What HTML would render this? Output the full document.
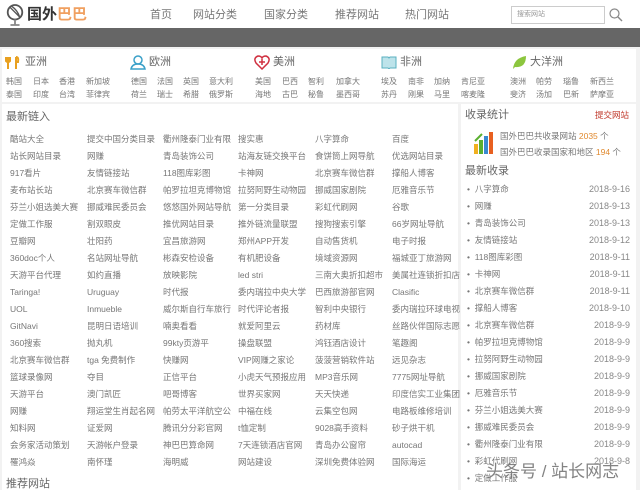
<!DOCTYPE html>
<html><head><meta charset="utf-8"><style>
*{margin:0;padding:0;box-sizing:border-box}
body{width:640px;height:490px;overflow:hidden;background:#f2f2f2;font-family:"Liberation Sans","Noto Sans CJK SC",sans-serif;color:#555;position:relative}
.a{position:absolute;white-space:nowrap;line-height:12px}
.hdr{position:absolute;left:0;top:0;width:640px;height:28px;background:#fff}
.band{position:absolute;left:0;top:28px;width:640px;height:19px;background:#666}
.cont{position:absolute;left:2px;top:49px;width:634px;height:53px;background:#fff}
.main{position:absolute;left:2px;top:104px;width:456px;height:386px;background:#fff}
.side{position:absolute;left:461px;top:104px;width:175px;height:386px;background:#fff}
.nav{font-size:11px;color:#777;top:9px}
.ch{font-size:11px;color:#666;top:56px}
.cc{font-size:8px;color:#777}
.l{font-size:8.5px;color:#777}
.h{font-size:11px;color:#666}
.d{font-size:9px;color:#888}
</style></head><body>
<div class="hdr"></div><div class="band"></div><div class="cont"></div><div class="main"></div><div class="side"></div>

<svg class="a" style="left:5px;top:3px" width="20" height="24" viewBox="0 0 22 26"><circle cx="11" cy="10" r="8" fill="none" stroke="#555" stroke-width="2"/><path d="M5 4 L17 16 M7 3 Q14 8 16 15" stroke="#555" stroke-width="1.5" fill="none"/><path d="M11 18 V23 M6 24 H16" stroke="#888" stroke-width="2"/></svg>
<div class="a" style="left:27px;top:7px;font-size:15px;line-height:16px;color:#333;font-weight:bold">国外<span style="color:#f0a060">巴巴</span></div>
<div class="a nav" style="left:150px">首页</div>
<div class="a nav" style="left:193px">网站分类</div>
<div class="a nav" style="left:264px">国家分类</div>
<div class="a nav" style="left:335px">推荐网站</div>
<div class="a nav" style="left:405px">热门网站</div>
<div class="a" style="left:511px;top:6px;width:94px;height:18px;border:1px solid #ccc;background:#fff;font-size:7px;color:#999;padding:2px 0 0 5px">搜索网站</div>
<svg class="a" style="left:608px;top:7px" width="16" height="16"><circle cx="6.5" cy="6.5" r="4.5" fill="none" stroke="#888" stroke-width="1.2"/><path d="M10 10 L14 14" stroke="#888" stroke-width="1.4"/></svg>

<svg class="a" style="left:5px;top:56px" width="16" height="14"><path d="M3 1 V13 M1 1 V5 Q3 7 5 5 V1 M11 1 V13 M11 1 Q14 1 13 6 L11 6" stroke="#e8a020" stroke-width="2" fill="none"/></svg>
<div class="a ch" style="left:25px">亚洲</div>
<svg class="a" style="left:130px;top:55px" width="16" height="15"><circle cx="8" cy="5" r="4" fill="none" stroke="#3aa0c8" stroke-width="1.5"/><path d="M1 14 Q2 9 8 9 Q14 9 15 14 Z" fill="none" stroke="#3aa0c8" stroke-width="1.5"/></svg>
<div class="a ch" style="left:149px">欧洲</div>
<svg class="a" style="left:254px;top:55px" width="16" height="15"><path d="M8 14 L2 8 Q-1 3 4 1 Q7 1 8 3 Q9 1 12 1 Q17 3 14 8 Z" fill="none" stroke="#d03040" stroke-width="1.5"/><path d="M8 4 V10 M5 7 H11" stroke="#d03040" stroke-width="1.5"/></svg>
<div class="a ch" style="left:273px">美洲</div>
<svg class="a" style="left:381px;top:56px" width="16" height="13"><path d="M1 1 H7 L8 2 L9 1 H15 V12 H9 L8 13 L7 12 H1 Z" fill="#bde3ea" stroke="#5ab0c0"/></svg>
<div class="a ch" style="left:400px">非洲</div>
<svg class="a" style="left:511px;top:55px" width="16" height="15"><path d="M2 14 Q3 3 15 1 Q15 13 4 12 Z" fill="#8cc63e"/></svg>
<div class="a ch" style="left:530px">大洋洲</div>

<div class="a cc" style="left:6px;top:76px">韩国</div><div class="a cc" style="left:33px;top:76px">日本</div><div class="a cc" style="left:59px;top:76px">香港</div><div class="a cc" style="left:86px;top:76px">新加坡</div>
<div class="a cc" style="left:6px;top:89px">泰国</div><div class="a cc" style="left:33px;top:89px">印度</div><div class="a cc" style="left:59px;top:89px">台湾</div><div class="a cc" style="left:86px;top:89px">菲律宾</div>
<div class="a cc" style="left:131px;top:76px">德国</div><div class="a cc" style="left:157px;top:76px">法国</div><div class="a cc" style="left:183px;top:76px">英国</div><div class="a cc" style="left:209px;top:76px">意大利</div>
<div class="a cc" style="left:131px;top:89px">荷兰</div><div class="a cc" style="left:157px;top:89px">瑞士</div><div class="a cc" style="left:183px;top:89px">希腊</div><div class="a cc" style="left:209px;top:89px">俄罗斯</div>
<div class="a cc" style="left:255px;top:76px">美国</div><div class="a cc" style="left:282px;top:76px">巴西</div><div class="a cc" style="left:308px;top:76px">智利</div><div class="a cc" style="left:336px;top:76px">加拿大</div>
<div class="a cc" style="left:255px;top:89px">海地</div><div class="a cc" style="left:282px;top:89px">古巴</div><div class="a cc" style="left:308px;top:89px">秘鲁</div><div class="a cc" style="left:336px;top:89px">墨西哥</div>
<div class="a cc" style="left:381px;top:76px">埃及</div><div class="a cc" style="left:408px;top:76px">南非</div><div class="a cc" style="left:434px;top:76px">加纳</div><div class="a cc" style="left:461px;top:76px">肯尼亚</div>
<div class="a cc" style="left:381px;top:89px">苏丹</div><div class="a cc" style="left:408px;top:89px">刚果</div><div class="a cc" style="left:434px;top:89px">马里</div><div class="a cc" style="left:461px;top:89px">喀麦隆</div>
<div class="a cc" style="left:510px;top:76px">澳洲</div><div class="a cc" style="left:536px;top:76px">帕劳</div><div class="a cc" style="left:563px;top:76px">瑙鲁</div><div class="a cc" style="left:590px;top:76px">新西兰</div>
<div class="a cc" style="left:510px;top:89px">斐济</div><div class="a cc" style="left:536px;top:89px">汤加</div><div class="a cc" style="left:563px;top:89px">巴新</div><div class="a cc" style="left:590px;top:89px">萨摩亚</div>

<div class="a h" style="left:6px;top:111px">最新链入</div>
<div class="a l" style="left:10px;top:133px">酷站大全</div><div class="a l" style="left:87px;top:133px">提交中国分类目录</div><div class="a l" style="left:163px;top:133px">衢州隆泰门业有限</div><div class="a l" style="left:238px;top:133px">搜实惠</div><div class="a l" style="left:315px;top:133px">八字算命</div><div class="a l" style="left:392px;top:133px">百度</div>
<div class="a l" style="left:10px;top:150px">站长网站目录</div><div class="a l" style="left:87px;top:150px">网赚</div><div class="a l" style="left:163px;top:150px">青岛装饰公司</div><div class="a l" style="left:238px;top:150px">站海友链交换平台</div><div class="a l" style="left:315px;top:150px">食饼筒上网导航</div><div class="a l" style="left:392px;top:150px">优选网站目录</div>
<div class="a l" style="left:10px;top:167px">917看片</div><div class="a l" style="left:87px;top:167px">友情链接站</div><div class="a l" style="left:163px;top:167px">118图库彩图</div><div class="a l" style="left:238px;top:167px">卡神网</div><div class="a l" style="left:315px;top:167px">北京赛车微信群</div><div class="a l" style="left:392px;top:167px">撑船人博客</div>
<div class="a l" style="left:10px;top:184px">麦布站长站</div><div class="a l" style="left:87px;top:184px">北京赛车微信群</div><div class="a l" style="left:163px;top:184px">帕罗拉坦克博物馆</div><div class="a l" style="left:238px;top:184px">拉努阿野生动物园</div><div class="a l" style="left:315px;top:184px">挪威国家剧院</div><div class="a l" style="left:392px;top:184px">厄雅音乐节</div>
<div class="a l" style="left:10px;top:201px">芬兰小姐选美大赛</div><div class="a l" style="left:87px;top:201px">挪威难民委员会</div><div class="a l" style="left:163px;top:201px">悠悠国外网站导航</div><div class="a l" style="left:238px;top:201px">第一分类目录</div><div class="a l" style="left:315px;top:201px">彩虹代刷网</div><div class="a l" style="left:392px;top:201px">谷歌</div>
<div class="a l" style="left:10px;top:218px">定做工作服</div><div class="a l" style="left:87px;top:218px">割双眼皮</div><div class="a l" style="left:163px;top:218px">推优网站目录</div><div class="a l" style="left:238px;top:218px">推外链流量联盟</div><div class="a l" style="left:315px;top:218px">搜狗搜索引擎</div><div class="a l" style="left:392px;top:218px">66岁网址导航</div>
<div class="a l" style="left:10px;top:235px">豆瓣网</div><div class="a l" style="left:87px;top:235px">壮阳药</div><div class="a l" style="left:163px;top:235px">宜昌旅游网</div><div class="a l" style="left:238px;top:235px">郑州APP开发</div><div class="a l" style="left:315px;top:235px">自动售货机</div><div class="a l" style="left:392px;top:235px">电子时报</div>
<div class="a l" style="left:10px;top:252px">360doc个人</div><div class="a l" style="left:87px;top:252px">名站网址导航</div><div class="a l" style="left:163px;top:252px">彬森安检设备</div><div class="a l" style="left:238px;top:252px">有机肥设备</div><div class="a l" style="left:315px;top:252px">境域资源网</div><div class="a l" style="left:392px;top:252px">福城亚丁旅游网</div>
<div class="a l" style="left:10px;top:269px">天游平台代理</div><div class="a l" style="left:87px;top:269px">如约直播</div><div class="a l" style="left:163px;top:269px">放映影院</div><div class="a l" style="left:238px;top:269px">led stri</div><div class="a l" style="left:315px;top:269px">三南大奥折扣超市</div><div class="a l" style="left:392px;top:269px">美属社连锁折扣店</div>
<div class="a l" style="left:10px;top:286px">Taringa!</div><div class="a l" style="left:87px;top:286px">Uruguay</div><div class="a l" style="left:163px;top:286px">时代报</div><div class="a l" style="left:238px;top:286px">委内瑞拉中央大学</div><div class="a l" style="left:315px;top:286px">巴西旅游部官网</div><div class="a l" style="left:392px;top:286px">Clasific</div>
<div class="a l" style="left:10px;top:303px">UOL</div><div class="a l" style="left:87px;top:303px">Inmueble</div><div class="a l" style="left:163px;top:303px">威尔斯自行车旅行</div><div class="a l" style="left:238px;top:303px">时代评论者报</div><div class="a l" style="left:315px;top:303px">智利中央银行</div><div class="a l" style="left:392px;top:303px">委内瑞拉环球电视</div>
<div class="a l" style="left:10px;top:320px">GitNavi</div><div class="a l" style="left:87px;top:320px">昆明日语培训</div><div class="a l" style="left:163px;top:320px">喃奥看看</div><div class="a l" style="left:238px;top:320px">就爱阿里云</div><div class="a l" style="left:315px;top:320px">药材库</div><div class="a l" style="left:392px;top:320px">丝路伙伴国际志愿</div>
<div class="a l" style="left:10px;top:337px">360搜索</div><div class="a l" style="left:87px;top:337px">抛丸机</div><div class="a l" style="left:163px;top:337px">99kty页游平</div><div class="a l" style="left:238px;top:337px">操盘联盟</div><div class="a l" style="left:315px;top:337px">鸿钰酒店设计</div><div class="a l" style="left:392px;top:337px">笔趣阁</div>
<div class="a l" style="left:10px;top:354px">北京赛车微信群</div><div class="a l" style="left:87px;top:354px">tga 免费制作</div><div class="a l" style="left:163px;top:354px">快赚网</div><div class="a l" style="left:238px;top:354px">VIP网赚之家论</div><div class="a l" style="left:315px;top:354px">菠菠营销软件站</div><div class="a l" style="left:392px;top:354px">远见杂志</div>
<div class="a l" style="left:10px;top:371px">篮球录像网</div><div class="a l" style="left:87px;top:371px">夺目</div><div class="a l" style="left:163px;top:371px">正信平台</div><div class="a l" style="left:238px;top:371px">小虎天气预报应用</div><div class="a l" style="left:315px;top:371px">MP3音乐网</div><div class="a l" style="left:392px;top:371px">7775网址导航</div>
<div class="a l" style="left:10px;top:388px">天游平台</div><div class="a l" style="left:87px;top:388px">澳门凯匠</div><div class="a l" style="left:163px;top:388px">吧哥博客</div><div class="a l" style="left:238px;top:388px">世界买家网</div><div class="a l" style="left:315px;top:388px">天天快递</div><div class="a l" style="left:392px;top:388px">印度信实工业集团</div>
<div class="a l" style="left:10px;top:405px">网赚</div><div class="a l" style="left:87px;top:405px">翔运堂生肖起名网</div><div class="a l" style="left:163px;top:405px">帕劳太平洋航空公</div><div class="a l" style="left:238px;top:405px">中福在线</div><div class="a l" style="left:315px;top:405px">云集空包网</div><div class="a l" style="left:392px;top:405px">电路板维修培训</div>
<div class="a l" style="left:10px;top:422px">知料网</div><div class="a l" style="left:87px;top:422px">证爱网</div><div class="a l" style="left:163px;top:422px">腾讯分分彩官网</div><div class="a l" style="left:238px;top:422px">t恤定制</div><div class="a l" style="left:315px;top:422px">9028高手资料</div><div class="a l" style="left:392px;top:422px">砂子烘干机</div>
<div class="a l" style="left:10px;top:439px">会务家活动策划</div><div class="a l" style="left:87px;top:439px">天游帐户登录</div><div class="a l" style="left:163px;top:439px">神巴巴算命网</div><div class="a l" style="left:238px;top:439px">7天连锁酒店官网</div><div class="a l" style="left:315px;top:439px">青岛办公窗帘</div><div class="a l" style="left:392px;top:439px">autocad</div>
<div class="a l" style="left:10px;top:456px">罹鸿焱</div><div class="a l" style="left:87px;top:456px">南怀瑾</div><div class="a l" style="left:163px;top:456px">海明威</div><div class="a l" style="left:238px;top:456px">网站建设</div><div class="a l" style="left:315px;top:456px">深圳免费体验网</div><div class="a l" style="left:392px;top:456px">国际海运</div>
<div class="a h" style="left:6px;top:478px">推荐网站</div>

<div class="a h" style="left:465px;top:109px">收录统计</div>
<div class="a" style="left:595px;top:109px;font-size:8.5px;color:#c0392b">提交网站</div>
<svg class="a" style="left:473px;top:130px" width="22" height="25"><rect x="1" y="14" width="4" height="10" fill="#f0b020"/><rect x="6" y="10" width="4" height="14" fill="#5ab030"/><rect x="11" y="6" width="4" height="18" fill="#3a8ad0"/><rect x="16" y="2" width="4" height="22" fill="#e86020"/><path d="M2 11 L9 4" stroke="#5ab030" stroke-width="2"/></svg>
<div class="a" style="left:500px;top:130px;font-size:8.5px;color:#777">国外巴巴共收录网站 <span style="color:#e08a30">2035</span> 个</div>
<div class="a" style="left:500px;top:146px;font-size:8.5px;color:#777">国外巴巴收录国家和地区 <span style="color:#e08a30">194</span> 个</div>
<div class="a h" style="left:465px;top:165px">最新收录</div>
<div class="a l" style="left:467px;top:183px">•&nbsp; 八字算命</div><div class="a d" style="right:10px;top:183px">2018-9-16</div>
<div class="a l" style="left:467px;top:200px">•&nbsp; 网赚</div><div class="a d" style="right:10px;top:200px">2018-9-13</div>
<div class="a l" style="left:467px;top:217px">•&nbsp; 青岛装饰公司</div><div class="a d" style="right:10px;top:217px">2018-9-13</div>
<div class="a l" style="left:467px;top:234px">•&nbsp; 友情链接站</div><div class="a d" style="right:10px;top:234px">2018-9-12</div>
<div class="a l" style="left:467px;top:251px">•&nbsp; 118图库彩图</div><div class="a d" style="right:10px;top:251px">2018-9-11</div>
<div class="a l" style="left:467px;top:268px">•&nbsp; 卡神网</div><div class="a d" style="right:10px;top:268px">2018-9-11</div>
<div class="a l" style="left:467px;top:285px">•&nbsp; 北京赛车微信群</div><div class="a d" style="right:10px;top:285px">2018-9-11</div>
<div class="a l" style="left:467px;top:302px">•&nbsp; 撑船人博客</div><div class="a d" style="right:10px;top:302px">2018-9-10</div>
<div class="a l" style="left:467px;top:319px">•&nbsp; 北京赛车微信群</div><div class="a d" style="right:10px;top:319px">2018-9-9</div>
<div class="a l" style="left:467px;top:336px">•&nbsp; 帕罗拉坦克博物馆</div><div class="a d" style="right:10px;top:336px">2018-9-9</div>
<div class="a l" style="left:467px;top:353px">•&nbsp; 拉努阿野生动物园</div><div class="a d" style="right:10px;top:353px">2018-9-9</div>
<div class="a l" style="left:467px;top:370px">•&nbsp; 挪威国家剧院</div><div class="a d" style="right:10px;top:370px">2018-9-9</div>
<div class="a l" style="left:467px;top:387px">•&nbsp; 厄雅音乐节</div><div class="a d" style="right:10px;top:387px">2018-9-9</div>
<div class="a l" style="left:467px;top:404px">•&nbsp; 芬兰小姐选美大赛</div><div class="a d" style="right:10px;top:404px">2018-9-9</div>
<div class="a l" style="left:467px;top:421px">•&nbsp; 挪威难民委员会</div><div class="a d" style="right:10px;top:421px">2018-9-9</div>
<div class="a l" style="left:467px;top:438px">•&nbsp; 衢州隆泰门业有限</div><div class="a d" style="right:10px;top:438px">2018-9-9</div>
<div class="a l" style="left:467px;top:455px">•&nbsp; 彩虹代刷网</div><div class="a d" style="right:10px;top:455px">2018-9-8</div>
<div class="a l" style="left:467px;top:472px">•&nbsp; 定做工作服</div>
<div class="a" style="left:486px;top:462px;font-size:17px;line-height:20px;color:rgba(100,100,100,0.8);text-shadow:0 0 2px #fff">头条号 / 站长网志</div>
</body></html>
